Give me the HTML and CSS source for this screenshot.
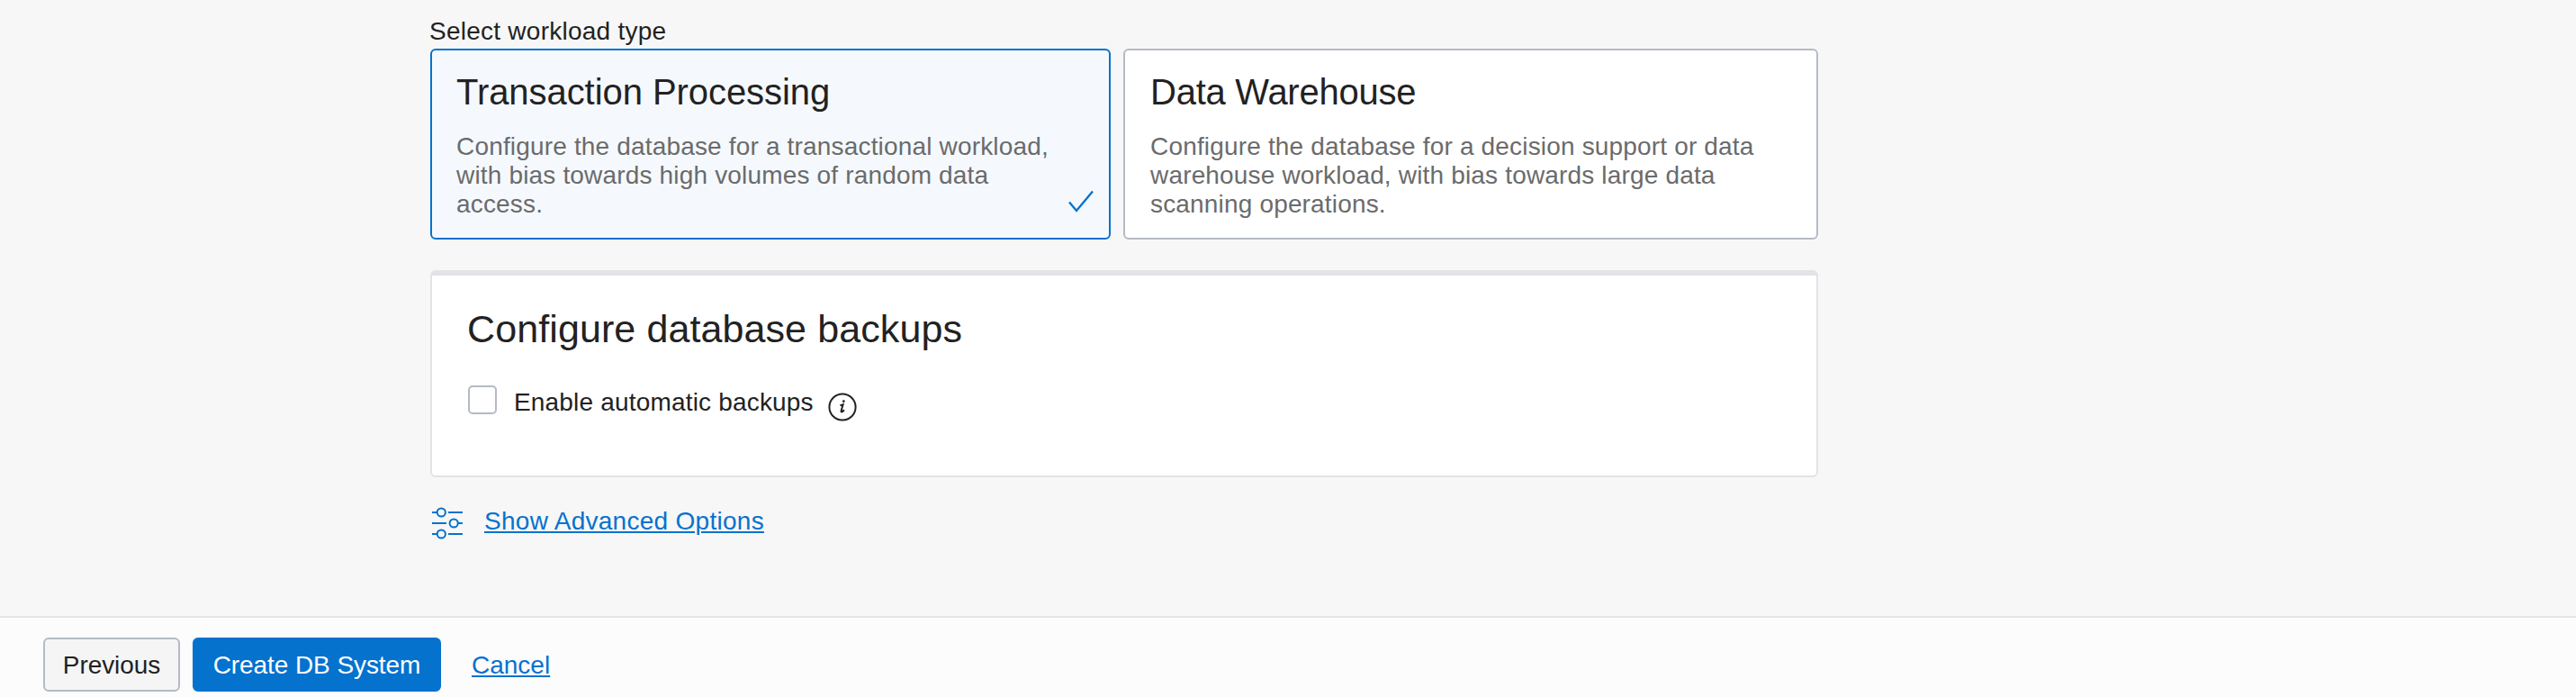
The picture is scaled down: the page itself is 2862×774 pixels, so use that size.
FILE: index.html
```html
<!DOCTYPE html>
<html lang="en">
<head>
<meta charset="utf-8">
<title>Create DB System</title>
<link rel="stylesheet" href="styles.css">
</head>
<body>
<main class="content">
  <div class="field-label">Select workload type</div>
  <div class="cards">
    <section class="card card-selected">
      <h3 class="card-title">Transaction Processing</h3>
      <p class="card-text">Configure the database for a transactional workload,<br>with bias towards high volumes of random data<br>access.</p>
      <svg class="card-check" viewBox="0 0 30 28" width="30" height="28"><path d="M2 14.5 10 24 28 2.5"/></svg>
    </section>
    <section class="card">
      <h3 class="card-title card-title-alt">Data Warehouse</h3>
      <p class="card-text">Configure the database for a decision support or data<br>warehouse workload, with bias towards large data<br>scanning operations.</p>
    </section>
  </div>
  <section class="panel">
    <h2 class="panel-title">Configure database backups</h2>
    <div class="option">
      <span class="checkbox"></span>
      <span class="option-label">Enable automatic backups</span>
      <svg class="info" viewBox="0 0 32 32" width="32" height="32">
        <circle cx="16" cy="16" r="14.6"/>
        <path class="info-stem" d="M13.4 14.4 16.6 13.2 14.6 20.2Q14.3 21.8 15.6 21.3L18 19.4"/>
        <circle class="info-dot" cx="17.3" cy="9.6" r="1.4"/>
      </svg>
    </div>
  </section>
  <div class="advanced">
    <svg class="sliders" viewBox="0 0 34 36" width="34" height="36">
      <path d="M0 6H5.5M18 6H34M0 18H16M29 18H34M0 30H5.5M18 30H34"/>
      <circle cx="10.3" cy="6" r="4.6"/>
      <circle cx="24.2" cy="18" r="4.6"/>
      <circle cx="10.3" cy="30" r="4.6"/>
    </svg>
    <a class="link link-advanced">Show Advanced Options</a>
  </div>
</main>
<footer class="footer">
  <button class="button">Previous</button>
  <button class="button button-primary">Create DB System</button>
  <a class="link link-cancel">Cancel</a>
</footer>
</body>
</html>
```
FILE: styles.css
```css
* {
  box-sizing: border-box;
  margin: 0;
}

body {
  display: flex;
  flex-direction: column;
  height: 774px;
  overflow: hidden;
  background: #f7f7f7;
  color: #222;
  font: 28px/32px "Liberation Sans", Arial, sans-serif;
}

.content {
  flex: 1;
  width: 1542px;
  margin-left: 478px;
  padding-top: 19px;
}

.field-label {
  margin-left: -1px;
  letter-spacing: 0.25px;
}

.cards {
  display: grid;
  grid-template-columns: 756px 772px;
  gap: 14px;
  margin-top: 3px;
}

.card {
  position: relative;
  height: 212px;
  padding: 22px 28px;
  border: 2px solid #b4bac6;
  border-radius: 6px;
  background: #fff;
}

.card-selected {
  padding-left: 27px;
  border-color: #0572ce;
  background: #f5f9fe;
}

.card-title {
  font-size: 40px;
  font-weight: 400;
  line-height: 48px;
  letter-spacing: -0.06px;
}

.card-title-alt {
  letter-spacing: -0.25px;
}

.card-text {
  margin-top: 21px;
  color: #6b6b6b;
  letter-spacing: 0.17px;
  white-space: nowrap;
}

.card-check {
  position: absolute;
  right: 16px;
  bottom: 26px;
  fill: none;
  stroke: #0572ce;
  stroke-width: 2.4;
}

.panel {
  height: 230px;
  margin-top: 34px;
  padding: 33px 39px;
  border: 2px solid #e1e3e7;
  border-top-width: 6px;
  border-radius: 6px;
  background: #fff;
}

.panel-title {
  font-size: 43px;
  font-weight: 400;
  line-height: 52px;
  letter-spacing: 0.1px;
}

.option {
  display: flex;
  align-items: flex-start;
  margin: 37px 0 0 1px;
}

.checkbox {
  width: 32px;
  height: 32px;
  border: 2px solid #b4bac6;
  border-radius: 5px;
  background: #fff;
}

.option-label {
  width: 331px;
  margin: 3px 18px 0 19px;
  letter-spacing: 0.18px;
  white-space: nowrap;
}

.info {
  margin-top: 8px;
  fill: none;
  stroke: #222;
  stroke-width: 2;
}

.info-dot {
  fill: #222;
  stroke: none;
}

.advanced {
  display: flex;
  gap: 24px;
  margin: 33px 0 0 2px;
}

.sliders {
  fill: none;
  stroke: #0572ce;
  stroke-width: 2;
}

.link {
  color: #0572ce;
  text-decoration: underline;
  text-decoration-thickness: 2px;
  text-underline-offset: 2px;
}

.link-advanced {
  letter-spacing: 0.28px;
}

.footer {
  display: flex;
  height: 90px;
  padding: 22px 48px 0;
  border-top: 2px solid #e5e5e5;
  background: #fcfcfc;
}

.button {
  width: 152px;
  height: 60px;
  margin-right: 14px;
  padding: 2px 0 0;
  border: 2px solid #b4bac6;
  border-radius: 6px;
  background: #f5f5f5;
  color: #222;
  font: inherit;
  letter-spacing: -0.08px;
}

.button-primary {
  width: 276px;
  margin-right: 34px;
  border-color: #0572ce;
  background: #0572ce;
  color: #fff;
}

.link-cancel {
  margin-top: 15px;
}
```
